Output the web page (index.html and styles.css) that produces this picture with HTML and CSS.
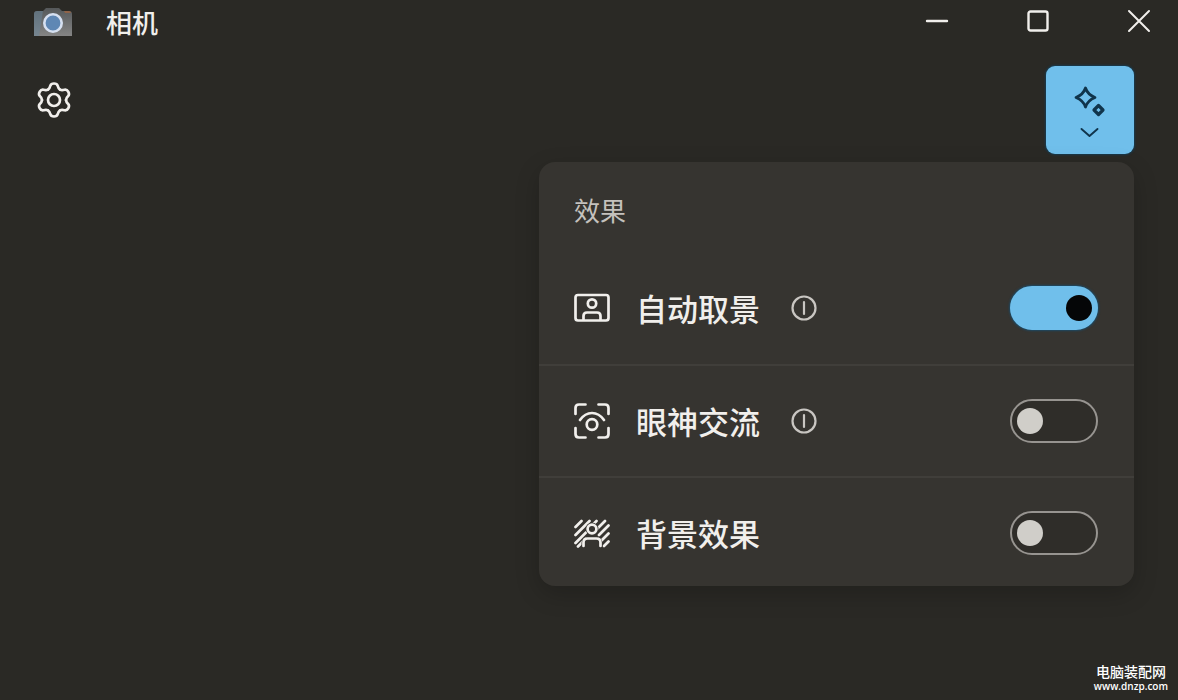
FILE: index.html
```html
<!DOCTYPE html>
<html lang="zh-CN">
<head>
<meta charset="utf-8">
<meta name="viewport" content="width=device-width, initial-scale=1">
<title>相机</title>
<link rel="stylesheet" href="styles.css">
</head>
<body>
<header class="titlebar">
  <svg class="app-icon" viewBox="0 0 38 30" aria-hidden="true">
    <defs>
      <linearGradient id="camera-body" x1="0" y1="0" x2="0" y2="1">
        <stop offset="0" stop-color="#55585a"/>
        <stop offset="1" stop-color="#858585"/>
      </linearGradient>
    </defs>
    <path d="M0 6Q0 3 3 3H9L12 0H25L28 3H35Q38 3 38 6V28H0Z" fill="url(#camera-body)"/>
    <path d="M0 6Q0 3 3 3H9L5 28H0Z" fill="#68869c" opacity=".5"/>
    <path d="M30 3H35Q37 3 37 5H31Z" fill="#a5653f" opacity=".7"/>
    <circle cx="19" cy="15" r="8.7" fill="#5f87b4" stroke="#d6e0f1" stroke-width="2.6"/>
  </svg>
  <h1 class="title">相机</h1>
  <div class="window-controls">
    <button class="window-button" type="button" aria-label="最小化">
      <svg viewBox="0 0 24 24"><path d="M2 12H22" stroke-width="2.400"/></svg>
    </button>
    <button class="window-button" type="button" aria-label="最大化">
      <svg viewBox="0 0 24 24"><rect x="2.500" y="2.500" width="19" height="19" rx="2" stroke-width="2.400"/></svg>
    </button>
    <button class="window-button" type="button" aria-label="关闭">
      <svg viewBox="0 0 24 24"><path d="M2 2L22 22M22 2L2 22" stroke-width="2"/></svg>
    </button>
  </div>
</header>

<main class="workspace">
  <div class="toolbar">
    <button class="settings-button" type="button" aria-label="设置">
      <svg viewBox="-19 -19 38 38">
        <defs><path id="tooth" d="M-6 -10.400C-4.600 -11.300 -4.100 -12.300 -3.700 -14.200Q-3 -16.500 0 -16.500Q3 -16.500 3.700 -14.200C4.100 -12.300 4.600 -11.300 6 -10.400"/></defs>
        <use href="#tooth"/>
        <use href="#tooth" transform="rotate(60)"/>
        <use href="#tooth" transform="rotate(120)"/>
        <use href="#tooth" transform="rotate(180)"/>
        <use href="#tooth" transform="rotate(240)"/>
        <use href="#tooth" transform="rotate(300)"/>
        <circle r="6"/>
      </svg>
    </button>
    <button class="effects-button" type="button" aria-label="效果" aria-expanded="true">
      <svg viewBox="0 0 34 56">
        <path d="M12.500 6C14 10.500 17 13.500 22 15.500C17 17.500 14 20.500 12.500 25C11 20.500 8 17.500 3 15.500C8 13.500 11 10.500 12.500 6Z" stroke-width="2.800"/>
        <path d="M25.500 23.500L30 28L25.500 32.500L21 28Z" stroke-width="3.200"/>
        <path d="M8.500 47L16.500 54L24.500 47" stroke-width="1.900"/>
      </svg>
    </button>
  </div>

  <section class="panel" aria-labelledby="effects-heading">
    <h2 class="panel-heading" id="effects-heading">效果</h2>

    <div class="row">
      <svg class="row-icon" viewBox="0 0 36 36" aria-hidden="true">
        <rect x="1.500" y="5" width="33" height="25.500" rx="2.500"/>
        <circle cx="18" cy="13.500" r="4.200"/>
        <path d="M9.500 29.500V26Q9.500 22.500 13 22.500H23Q26.500 22.500 26.500 26V29.500"/>
      </svg>
      <label class="row-label" for="auto-framing">自动取景</label>
      <button class="info" type="button" aria-label="关于自动取景">
        <svg viewBox="0 0 26 26"><circle cx="13" cy="13" r="11.500"/><path d="M13 7V19"/></svg>
      </button>
      <input class="toggle" id="auto-framing" type="checkbox" role="switch" checked>
    </div>

    <div class="row">
      <svg class="row-icon" viewBox="0 0 36 36" aria-hidden="true">
        <path d="M1.500 11V5Q1.500 1.500 5 1.500H11.500M24.500 1.500H31Q34.500 1.500 34.500 5V11M34.500 25V31Q34.500 34.500 31 34.500H24.500M11.500 34.500H5Q1.500 34.500 1.500 31V25"/>
        <path d="M6 17Q11 10 18 10Q25 10 30 17"/>
        <circle cx="18" cy="21.500" r="5.300"/>
      </svg>
      <label class="row-label" for="eye-contact">眼神交流</label>
      <button class="info" type="button" aria-label="关于眼神交流">
        <svg viewBox="0 0 26 26"><circle cx="13" cy="13" r="11.500"/><path d="M13 7V19"/></svg>
      </button>
      <input class="toggle" id="eye-contact" type="checkbox" role="switch">
    </div>

    <div class="row">
      <svg class="row-icon" viewBox="0 0 36 36" aria-hidden="true">
        <path d="M1.500 12L7.500 6M1.500 20L15.500 6M1.500 28L12 17.500M17 11.500L22.500 6M4 31.500L12 23.500M23 14L31 6M25 20L34.500 10.500M27 26L34.500 18.500M30 31L34.500 26.500"/>
        <circle class="cutout" cx="18" cy="14" r="6.500"/>
        <path class="cutout" d="M7.500 33V28Q8 22 13 22H23Q28 22 28.500 28V33Z"/>
        <circle cx="18" cy="14" r="4.400"/>
        <path d="M9.500 31V27.500Q9.500 23.500 13.500 23.500H22.500Q26.500 23.500 26.500 27.500V31"/>
      </svg>
      <label class="row-label" for="background-effects">背景效果</label>
      <input class="toggle" id="background-effects" type="checkbox" role="switch">
    </div>
  </section>
</main>

<footer class="watermark">
  <span class="watermark-name">电脑装配网</span>
  <span class="watermark-url">www.dnzp.com</span>
</footer>
</body>
</html>
```
FILE: styles.css
```css
* {
  box-sizing: border-box;
}

body {
  margin: 0;
  min-height: 100vh;
  background: #2a2925;
  color: #f1efec;
  font-family: "Noto Sans CJK SC", sans-serif;
}

button {
  padding: 0;
  border: 0;
  background: none;
  color: inherit;
}

svg {
  display: block;
  fill: none;
  stroke: currentColor;
  stroke-width: 2.7;
  stroke-linecap: round;
  stroke-linejoin: round;
}

.titlebar {
  display: flex;
  align-items: center;
  height: 46px;
  padding-left: 34px;
}

.app-icon {
  width: 38px;
  height: 30px;
  stroke: none;
}

.title {
  margin: 0 0 0 34px;
  padding-bottom: 2px;
  font-size: 26px;
  line-height: 36px;
  font-weight: 500;
}

.window-controls {
  display: flex;
  align-self: flex-start;
  margin-left: auto;
  margin-right: -11px;
}

.window-button {
  display: grid;
  place-items: center;
  width: 101px;
  height: 42px;
}

.window-button svg {
  width: 24px;
  height: 24px;
}

.workspace {
  display: flex;
  flex-direction: column;
  padding: 20px 44px 0 34px;
}

.toolbar {
  display: flex;
  justify-content: space-between;
  align-items: flex-start;
}

.settings-button {
  display: grid;
  place-items: center;
  width: 40px;
  height: 68px;
}

.settings-button svg {
  width: 38px;
  height: 38px;
}

.effects-button {
  display: grid;
  place-items: center;
  width: 88px;
  height: 88px;
  border-radius: 9px;
  background: #70bfeb;
  color: #10344b;
  box-shadow: 0 0 2px 1px #173b50;
}

.effects-button svg {
  width: 34px;
  height: 56px;
}

.panel {
  align-self: flex-end;
  width: 595px;
  max-width: 100%;
  margin-top: 8px;
  border-radius: 16px;
  background: #363430;
  box-shadow: 0 8px 24px rgba(0, 0, 0, 0.2);
}

.panel-heading {
  margin: 0;
  padding: 30px 35px 24px;
  color: #c4c1bd;
  font-size: 26px;
  line-height: 36px;
  font-weight: 400;
}

.row {
  display: flex;
  align-items: center;
  height: 112px;
  padding: 0 36px 0 35px;
}

.row + .row {
  border-top: 2px solid #403e3a;
}

.row:last-child {
  height: 110px;
  padding-top: 2px;
}

.row-icon {
  width: 36px;
  height: 36px;
}

.cutout {
  fill: #363430;
  stroke: none;
}

.row-label {
  margin-left: 26px;
  font-size: 31px;
  line-height: 44px;
  font-weight: 500;
}

.info {
  margin-left: 31px;
  color: #c9c6c2;
}

.info svg {
  width: 26px;
  height: 26px;
  stroke-width: 2.2;
}

.toggle {
  display: flex;
  align-items: center;
  appearance: none;
  width: 88px;
  height: 44px;
  margin: 0 0 0 auto;
  padding: 0 5px;
  border: 2px solid #979490;
  border-radius: 22px;
  background: #2f2d29;
}

.toggle::before {
  content: "";
  width: 26px;
  height: 26px;
  border-radius: 50%;
  background: #d0cec9;
}

.toggle:checked {
  justify-content: flex-end;
  padding: 0 4px;
  border-color: #70bfeb;
  background: #70bfeb;
  box-shadow: 0 0 2px 1px #1c4a65;
}

.toggle:checked::before {
  background: #050607;
}

.watermark {
  position: absolute;
  right: 10px;
  bottom: 8px;
  display: flex;
  flex-direction: column;
  align-items: center;
  color: #fff;
}

.watermark-name {
  font-size: 14px;
  line-height: 18px;
  font-weight: 500;
}

.watermark-url {
  font-family: "Open Sans", sans-serif;
  font-size: 10px;
  line-height: 12px;
  font-weight: 600;
}
```
